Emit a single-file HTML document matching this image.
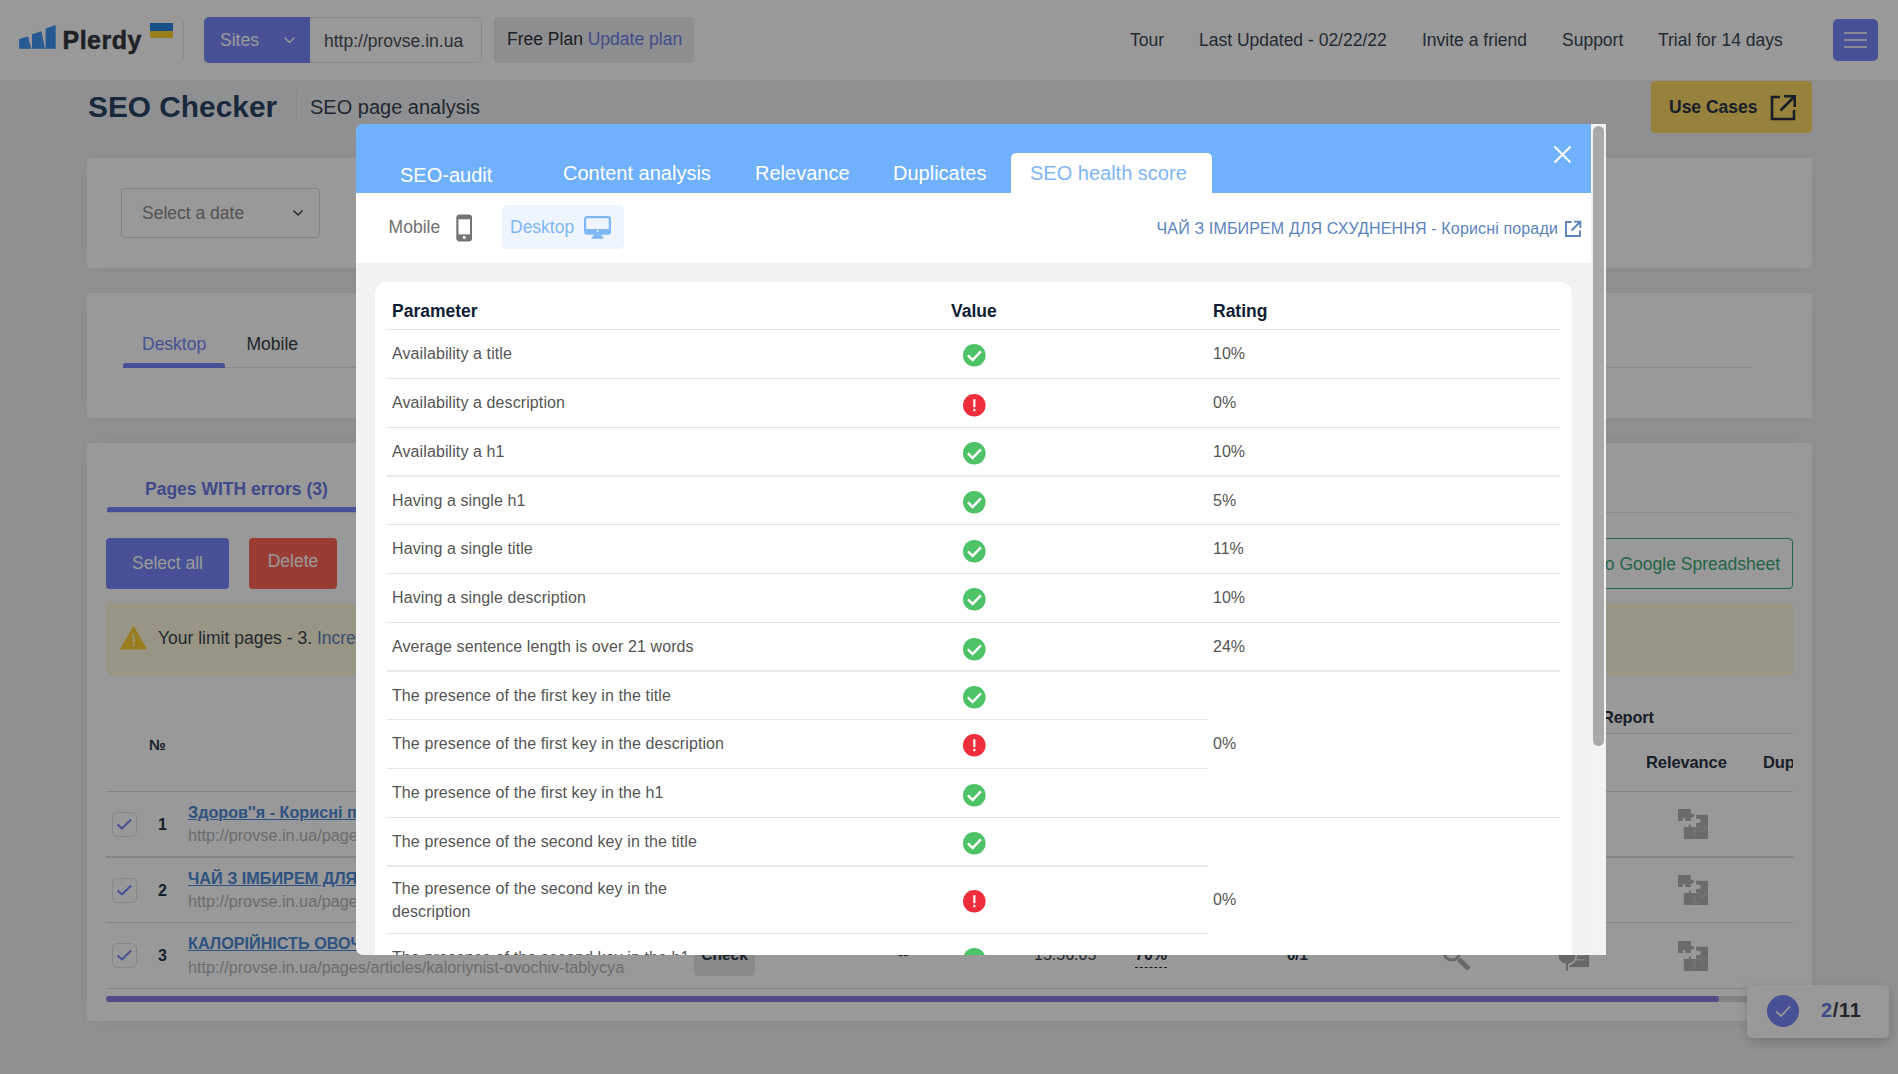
<!DOCTYPE html>
<html lang="en"><head><meta charset="utf-8"><title>SEO Checker</title>
<style>
*{box-sizing:border-box;margin:0;padding:0}
html,body{width:1898px;height:1074px;overflow:hidden}
body{font-family:"Liberation Sans",sans-serif;background:#eff1f4;position:relative;color:#2b2e33}
.abs{position:absolute}
#page{position:absolute;left:0;top:0;width:1898px;height:1074px;overflow:hidden}
#hdr{position:absolute;left:0;top:0;width:1898px;height:80px;background:#fff}
.nav{position:absolute;top:30px;font-size:17.5px;line-height:20px;color:#3a4754;white-space:nowrap}
.card{position:absolute;left:87px;width:1725px;background:#fff;border-radius:4px;box-shadow:0 0 18px rgba(0,0,0,.06)}
#overlay{position:absolute;left:0;top:0;width:1898px;height:1074px;background:rgba(0,0,0,.4)}
#modal{position:absolute;left:356px;top:124px;width:1250px;height:831px;background:#f1f2f4;border-radius:7px 0 0 7px;overflow:hidden}
#mw{position:absolute;left:0;top:1px;width:1250px;height:830px}
#mhead{position:absolute;left:0;top:-1px;width:1235px;height:69px;background:#70b1fd}
.tab{position:absolute;color:#fff;font-size:20px;line-height:24px;white-space:nowrap}
#msub{position:absolute;left:0;top:68px;width:1235px;height:70px;background:#fff}
#mcard{position:absolute;left:19px;top:157px;width:1197px;height:700px;background:#fff;border-radius:12px}
.row{position:absolute;left:12px;height:1px;background:#e3e5e8}
.p{position:absolute;left:17px;font-size:16px;line-height:23px;color:#555;white-space:nowrap;letter-spacing:.1px}
.r{position:absolute;left:838px;font-size:16px;line-height:20px;color:#555;margin-top:1px}
.ic{position:absolute;left:588.1px;width:22.6px;height:22.6px;margin-top:2.2px}
</style></head><body>
<div id="page">
<div id="hdr">
<svg class="abs" style="left:18px;top:22px" width="40" height="30" viewBox="0 0 40 30"><g fill="#4094f2"><path d="M1.1 17 L10 14.5 L13.3 26.8 L1.1 26.8Z"/><path d="M14 12.2 L23.5 9.2 L27 26.8 L14 26.8Z"/><path d="M27.6 6.4 L37.7 3 L37.7 26.8 L27.6 26.8Z"/></g><path d="M10 15 V26.8 M23.5 10 V26.8" stroke="#6aaef8" stroke-width=".7" fill="none"/></svg>
<div class="abs" style="left:62.5px;top:22px;font-size:25px;line-height:36px;font-weight:bold;color:#343840;letter-spacing:.5px;-webkit-text-stroke:.5px #343840">Plerdy</div>
<div class="abs" style="left:150px;top:23px;width:23px;height:8px;background:#2b86e6"></div>
<div class="abs" style="left:150px;top:31px;width:23px;height:7px;background:#ffd42e"></div>
<div class="abs" style="left:183px;top:21px;width:1px;height:38px;background:#e8e8e8"></div>
<div class="abs" style="left:204px;top:17px;width:106px;height:46px;background:#7888f8;border-radius:5px 0 0 5px"></div>
<div class="abs" style="left:220px;top:29px;font-size:17.5px;line-height:22px;color:#fff">Sites</div>
<svg class="abs" style="left:283px;top:36px" width="13" height="9" viewBox="0 0 13 9"><path d="M1.5 1.5 L6.5 6.5 L11.5 1.5" fill="none" stroke="#fff" stroke-width="1.4"/></svg>
<div class="abs" style="left:310px;top:17px;width:172px;height:46px;border:1px solid #e4e4e4;border-left:none;border-radius:0 5px 5px 0"></div>
<div class="abs" style="left:324px;top:30px;font-size:17.5px;line-height:22px;color:#4a4f57">http://provse.in.ua</div>
<div class="abs" style="left:494px;top:17px;width:200px;height:46px;background:#ebedf0;border-radius:4px"></div>
<div class="abs" style="left:507px;top:28px;font-size:17.5px;line-height:22px;color:#2f333a;white-space:nowrap">Free Plan <span style="color:#6f7fe8">Update plan</span></div>
<div class="nav" style="left:1130px">Tour</div>
<div class="nav" style="left:1199px">Last Updated - 02/22/22</div>
<div class="nav" style="left:1422px">Invite a friend</div>
<div class="nav" style="left:1562px">Support</div>
<div class="nav" style="left:1658px">Trial for 14 days</div>
<div class="abs" style="left:1833px;top:19px;width:45px;height:42px;background:#7888f8;border-radius:5px"></div>
<div class="abs" style="left:1844px;top:32px;width:23px;height:2px;background:#dfe3ff;box-shadow:0 7px 0 #dfe3ff,0 14px 0 #dfe3ff"></div>
</div>
<div class="abs" style="left:88px;top:88px;font-size:29.85px;line-height:38px;font-weight:bold;color:#2a4365;white-space:nowrap">SEO Checker</div>
<div class="abs" style="left:296px;top:90px;width:1px;height:34px;background:#e3e5e8"></div>
<div class="abs" style="left:310px;top:95px;font-size:20px;line-height:24px;color:#3a4350;white-space:nowrap">SEO page analysis</div>
<div class="abs" style="left:1651px;top:81px;width:161px;height:52px;background:#fbd966;border-radius:4px"></div>
<div class="abs" style="left:1669px;top:96px;font-size:17.5px;line-height:22px;font-weight:bold;color:#2a3445;white-space:nowrap">Use Cases</div>
<svg class="abs" style="left:1768px;top:93px" width="30" height="30" viewBox="0 0 30 30"><path d="M12 4 H4 V26 H26 V17" fill="none" stroke="#2a3445" stroke-width="2.6"/><path d="M16 3.3 H26.7 V14 M26 4 L12.5 17.5" fill="none" stroke="#2a3445" stroke-width="2.6"/></svg>
<div class="card" style="top:158px;height:110px"></div>
<div class="abs" style="left:121px;top:188px;width:199px;height:50px;border:1px solid #d9d9d9;border-radius:4px"></div>
<div class="abs" style="left:142px;top:202px;font-size:17.5px;line-height:22px;color:#8a8a8a;white-space:nowrap">Select a date</div>
<svg class="abs" style="left:292px;top:208.5px" width="12" height="9" viewBox="0 0 12 9"><path d="M1.5 1.5 L6 6 L10.5 1.5" fill="none" stroke="#444" stroke-width="1.5"/></svg>
<div class="card" style="top:293px;height:125px"></div>
<div class="abs" style="left:142px;top:333px;font-size:17.5px;line-height:22px;color:#7888f8">Desktop</div>
<div class="abs" style="left:246.5px;top:333px;font-size:17.5px;line-height:22px;color:#3a3f47">Mobile</div>
<div class="abs" style="left:123px;top:367px;width:1629px;height:1px;background:#e6e8eb"></div>
<div class="abs" style="left:123px;top:363px;width:102px;height:5px;background:#7888f8;border-radius:3px 3px 0 0"></div>
<div class="card" style="top:443px;height:578px"></div>
<div class="abs" style="left:145px;top:478px;font-size:17.5px;line-height:22px;font-weight:bold;color:#6c7be6;white-space:nowrap">Pages WITH errors (3)</div>
<div class="abs" style="left:107px;top:512px;width:1686px;height:1px;background:#e3e5e8"></div>
<div class="abs" style="left:107px;top:507px;width:400px;height:5px;background:#7888f8;border-radius:3px 3px 0 0"></div>
<div class="abs" style="left:106px;top:538px;width:123px;height:51px;background:#7888f8;border-radius:4px"></div>
<div class="abs" style="left:132px;top:552px;font-size:17.5px;line-height:22px;color:#fff;white-space:nowrap">Select all</div>
<div class="abs" style="left:249px;top:538px;width:88px;height:51px;background:#ff6456;border-radius:4px"></div>
<div class="abs" style="left:267.7px;top:550px;font-size:17.5px;line-height:22px;color:#fff;white-space:nowrap">Delete</div>
<div class="abs" style="left:1500px;top:538px;width:293px;height:51px;border:1px solid #3aa876;border-radius:4px"></div>
<div class="abs" style="right:118px;top:553px;font-size:17.5px;line-height:22px;color:#3aa876;white-space:nowrap">Export data to Google Spreadsheet</div>
<div class="abs" style="left:106px;top:603px;width:1687px;height:71.5px;background:#fff9dc;border-radius:4px"></div>
<svg class="abs" style="left:120px;top:626px" width="27" height="24" viewBox="0 0 27 24"><path d="M13.5 1.5 L25.5 22.5 H1.5Z" fill="#ffd136" stroke="#ffd136" stroke-width="2" stroke-linejoin="round"/><rect x="12.4" y="8" width="2.2" height="8" fill="#fff3c4"/><rect x="12.4" y="17.5" width="2.2" height="2.4" fill="#fff3c4"/></svg>
<div class="abs" style="left:158px;top:627px;font-size:17.5px;line-height:22px;color:#3a4452;white-space:nowrap">Your limit pages - 3. <span style="color:#5b84bd">Increase limits</span></div>
<div class="abs" style="left:149px;top:735px;font-size:15px;line-height:20px;font-weight:bold;color:#2a3445">№</div>
<div class="abs" style="left:1602px;top:707px;font-size:16.3px;line-height:20px;font-weight:bold;color:#2a3445;letter-spacing:-.1px">Report</div>
<div class="abs" style="left:1400px;top:733px;width:393px;height:1px;background:#dcdde0"></div>
<div class="abs" style="left:1646px;top:752px;font-size:16.5px;line-height:20px;font-weight:bold;color:#2a3445;letter-spacing:-.1px">Relevance</div>
<div class="abs" style="left:1763px;top:752px;width:30px;overflow:hidden;font-size:16.5px;line-height:20px;font-weight:bold;color:#2a3445;letter-spacing:-.1px;white-space:nowrap">Duplicates</div>
<div class="abs" style="left:106px;top:791px;width:1687px;height:1px;background:#dcdde0"></div>
<div class="abs" style="left:106px;top:856px;width:1687px;height:2px;background:#dcdde0"></div>
<div class="abs" style="left:106px;top:922px;width:1687px;height:1px;background:#dcdde0"></div>
<div class="abs" style="left:106px;top:988px;width:1687px;height:1px;background:#dcdde0"></div>
<div class="abs" style="left:112px;top:812px;width:25px;height:25px;border:1px solid #e2e3e8;border-radius:5px;background:#fff"></div>
<svg class="abs" style="left:116px;top:818px" width="17" height="13" viewBox="0 0 17 13"><path d="M1.5 6.5 L6 10.5 L15 1.5" fill="none" stroke="#7888f8" stroke-width="2"/></svg>
<div class="abs" style="left:158px;top:815px;font-size:16px;line-height:20px;font-weight:bold;color:#2a3445">1</div>
<div class="abs" style="left:188px;top:801px;font-size:16.2px;line-height:22px;font-weight:bold;color:#4d8bd6;text-decoration:underline;white-space:nowrap">Здоров''я - Корисні поради</div>
<div class="abs" style="left:188px;top:825px;font-size:16.25px;line-height:20px;color:#b4b4b4;white-space:nowrap">http://provse.in.ua/pages/articles/zdorovya</div>
<svg class="abs" style="left:1678px;top:809px" width="30" height="30" viewBox="0 0 30 30"><g fill="#b2b2b2"><path d="M0 0 H12.8 V4.7 H14.3 a1.85 1.85 0 0 1 0 3.7 H12.8 V12.1 H7.4 V9.3 H4.9 V12.1 H0Z"/><path d="M18.1 5.8 H30 V30 H5.8 V18.1 H10.9 V15.4 H13 V18.1 H18.1 V14 H20.6 a2.1 2.1 0 0 0 0 -4.2 H18.1Z"/></g><path d="M17.8 18.1 V22.3 H15.4 V25.6 H17.8 V30 M18.1 17.8 H22 V20.6 a2 2 0 0 0 4 0 V17.8 H30" fill="none" stroke="#cfcfcf" stroke-width=".8"/></svg>
<div class="abs" style="left:112px;top:878px;width:25px;height:25px;border:1px solid #e2e3e8;border-radius:5px;background:#fff"></div>
<svg class="abs" style="left:116px;top:884px" width="17" height="13" viewBox="0 0 17 13"><path d="M1.5 6.5 L6 10.5 L15 1.5" fill="none" stroke="#7888f8" stroke-width="2"/></svg>
<div class="abs" style="left:158px;top:881px;font-size:16px;line-height:20px;font-weight:bold;color:#2a3445">2</div>
<div class="abs" style="left:188px;top:867px;font-size:16.2px;line-height:22px;font-weight:bold;color:#4d8bd6;text-decoration:underline;white-space:nowrap">ЧАЙ З ІМБИРЕМ ДЛЯ СХУДНЕННЯ - Корисні поради</div>
<div class="abs" style="left:188px;top:891px;font-size:16.25px;line-height:20px;color:#b4b4b4;white-space:nowrap">http://provse.in.ua/pages/articles/chay-z-imbyrem</div>
<svg class="abs" style="left:1678px;top:875px" width="30" height="30" viewBox="0 0 30 30"><g fill="#b2b2b2"><path d="M0 0 H12.8 V4.7 H14.3 a1.85 1.85 0 0 1 0 3.7 H12.8 V12.1 H7.4 V9.3 H4.9 V12.1 H0Z"/><path d="M18.1 5.8 H30 V30 H5.8 V18.1 H10.9 V15.4 H13 V18.1 H18.1 V14 H20.6 a2.1 2.1 0 0 0 0 -4.2 H18.1Z"/></g><path d="M17.8 18.1 V22.3 H15.4 V25.6 H17.8 V30 M18.1 17.8 H22 V20.6 a2 2 0 0 0 4 0 V17.8 H30" fill="none" stroke="#cfcfcf" stroke-width=".8"/></svg>
<div class="abs" style="left:112px;top:943px;width:25px;height:25px;border:1px solid #e2e3e8;border-radius:5px;background:#fff"></div>
<svg class="abs" style="left:116px;top:949px" width="17" height="13" viewBox="0 0 17 13"><path d="M1.5 6.5 L6 10.5 L15 1.5" fill="none" stroke="#7888f8" stroke-width="2"/></svg>
<div class="abs" style="left:158px;top:946px;font-size:16px;line-height:20px;font-weight:bold;color:#2a3445">3</div>
<div class="abs" style="left:188px;top:932px;font-size:16.2px;line-height:22px;font-weight:bold;color:#4d8bd6;text-decoration:underline;white-space:nowrap">КАЛОРІЙНІСТЬ ОВОЧІВ - Корисні поради</div>
<div class="abs" style="left:188px;top:957px;font-size:16.25px;line-height:20px;color:#b4b4b4;white-space:nowrap">http://provse.in.ua/pages/articles/kaloriynist-ovochiv-tablycya</div>
<svg class="abs" style="left:1678px;top:940.7px" width="30" height="30" viewBox="0 0 30 30"><g fill="#b2b2b2"><path d="M0 0 H12.8 V4.7 H14.3 a1.85 1.85 0 0 1 0 3.7 H12.8 V12.1 H7.4 V9.3 H4.9 V12.1 H0Z"/><path d="M18.1 5.8 H30 V30 H5.8 V18.1 H10.9 V15.4 H13 V18.1 H18.1 V14 H20.6 a2.1 2.1 0 0 0 0 -4.2 H18.1Z"/></g><path d="M17.8 18.1 V22.3 H15.4 V25.6 H17.8 V30 M18.1 17.8 H22 V20.6 a2 2 0 0 0 4 0 V17.8 H30" fill="none" stroke="#cfcfcf" stroke-width=".8"/></svg>
<div class="abs" style="left:694px;top:936px;width:61px;height:40px;background:#e6e6e6;border-radius:4px"></div>
<div class="abs" style="left:694px;top:945px;width:61px;text-align:center;font-size:15.5px;line-height:20px;font-weight:bold;color:#2a3445">Check</div>
<div class="abs" style="left:898px;top:945px;font-size:15.5px;line-height:20px;color:#3a3f47">--</div>
<div class="abs" style="left:1034px;top:945px;font-size:16px;line-height:20px;color:#3a3f47;white-space:nowrap">15:56:05</div>
<div class="abs" style="left:1135px;top:945px;font-size:16px;line-height:20px;font-weight:bold;color:#2a3445;border-bottom:1px dashed #2a3445;height:23px">70%</div>
<div class="abs" style="left:1287px;top:945px;font-size:15px;line-height:20px;font-weight:bold;color:#2a3445">0/1</div>
<svg class="abs" style="left:1441px;top:940px" width="31" height="32" viewBox="0 0 31 32"><circle cx="10.8" cy="12.1" r="7.9" fill="none" stroke="#adadad" stroke-width="2.8"/><path d="M17.6 19.2 L28 29" stroke="#adadad" stroke-width="5"/></svg>
<svg class="abs" style="left:1558px;top:940px" width="33" height="32" viewBox="0 0 33 32"><path d="M11.6 6 H31.1 V27.1 H11.6Z" fill="#adadad"/><path d="M18 15 H26.4 M18 19.8 H26.4" stroke="#e0e0e0" stroke-width="1.4"/><circle cx="9" cy="15.6" r="9.2" fill="#adadad" stroke="#fff" stroke-width="1.6"/><path d="M9 20 V30.8" stroke="#adadad" stroke-width="2"/></svg>
<div class="abs" style="left:106px;top:996px;width:1687px;height:5.5px;background:#dadada;border-radius:3px"></div>
<div class="abs" style="left:106px;top:996px;width:1613px;height:5.5px;background:#8e7ce0;border-radius:3px"></div>
<div class="abs" style="left:1747px;top:985px;width:142px;height:53px;background:#fff;border-radius:5px;box-shadow:0 4px 12px rgba(0,0,0,.18)"></div>
<div class="abs" style="left:1767px;top:995px;width:32px;height:32px;border-radius:16px;background:#7888f8"></div>
<svg class="abs" style="left:1774px;top:1004px" width="18" height="15" viewBox="0 0 18 15"><path d="M2 7.5 L7 12 L16 2.5" fill="none" stroke="#fff" stroke-width="1.8"/></svg>
<div class="abs" style="left:1821px;top:998px;font-size:20px;line-height:24px;font-weight:bold;color:#3a3f47;white-space:nowrap;letter-spacing:.7px"><span style="color:#6c7be6">2</span>/11</div>
</div>
<div id="overlay"></div>
<div id="modal"><div id="mw">
<div id="mhead"></div>
<div class="tab" style="left:44px;top:38px">SEO-audit</div>
<div class="tab" style="left:207px;top:36px">Content analysis</div>
<div class="tab" style="left:399px;top:36px">Relevance</div>
<div class="tab" style="left:537px;top:36px">Duplicates</div>
<div class="abs" style="left:655px;top:28px;width:201px;height:42px;background:#fff;border-radius:5px 5px 0 0"></div>
<div class="tab" style="left:674px;top:36px;color:#7fb6f6">SEO health score</div>
<svg class="abs" style="left:1197px;top:20px" width="19" height="19" viewBox="0 0 19 19"><path d="M1.5 1.5 L17.5 17.5 M17.5 1.5 L1.5 17.5" fill="none" stroke="#fff" stroke-width="2"/></svg>
<div id="msub"></div>
<div class="abs" style="left:32.6px;top:91px;font-size:17.5px;line-height:22px;color:#707070">Mobile</div>
<svg class="abs" style="left:99.5px;top:88.5px" width="16.5" height="28" viewBox="0 0 18 30"><rect x="1.5" y="1.5" width="15" height="27" rx="2.5" fill="#fff" stroke="#747474" stroke-width="2.4"/><rect x="1.5" y="1.5" width="15" height="4" fill="#747474"/><rect x="1.5" y="22" width="15" height="6" fill="#747474"/><circle cx="9" cy="25.3" r="1.6" fill="#fff"/></svg>
<div class="abs" style="left:146px;top:80px;width:122px;height:44px;background:#eff5fe;border-radius:5px"></div>
<div class="abs" style="left:154px;top:91px;font-size:17.5px;line-height:22px;color:#7fb6f6">Desktop</div>
<svg class="abs" style="left:227.8px;top:91px" width="27" height="23.3" viewBox="0 0 29 25"><rect x="1.2" y="1.2" width="26.6" height="17.6" rx="2" fill="#eff5fe" stroke="#7fb6f6" stroke-width="2.4"/><rect x="1.2" y="14" width="26.6" height="4.8" fill="#7fb6f6"/><path d="M11 19 H18 L19 22.5 H10Z" fill="#7fb6f6"/><rect x="8" y="22" width="13" height="2.4" rx="1" fill="#7fb6f6"/><circle cx="14.5" cy="16.3" r="1" fill="#fff"/></svg>
<div class="abs" style="right:48px;top:94px;font-size:16px;line-height:20px;color:#5b84bd;white-space:nowrap;letter-spacing:.15px">ЧАЙ З ІМБИРЕМ ДЛЯ СХУДНЕННЯ - Корисні поради</div>
<svg class="abs" style="left:1208px;top:94.5px" width="18" height="18" viewBox="0 0 18 18"><path d="M7.5 2 H2 V16 H16 V10.5" fill="none" stroke="#5b84bd" stroke-width="1.9"/><path d="M10 1.6 H16.4 V8 M16 2 L7.5 10.5" fill="none" stroke="#5b84bd" stroke-width="1.9"/></svg>
<div id="mcard">
<div class="abs" style="left:17px;top:18px;font-size:17.5px;line-height:22px;font-weight:bold;color:#0f1c36">Parameter</div>
<div class="abs" style="left:576px;top:18px;font-size:17.5px;line-height:22px;font-weight:bold;color:#0f1c36">Value</div>
<div class="abs" style="left:838px;top:18px;font-size:17.5px;line-height:22px;font-weight:bold;color:#0f1c36">Rating</div>
<div class="row" style="top:47px;width:1173px;height:1px"></div>
<div class="p" style="top:60.0px">Availability a title</div>
<svg class="ic" style="top:60px" viewBox="0 0 24 24"><circle cx="12" cy="12" r="12" fill="#4ec266"/><path d="M5.2 12.2 L10.2 17 L19 7.8" fill="none" stroke="#fff" stroke-width="2.6"/></svg>
<div class="r" style="top:61.0px">10%</div>
<div class="row" style="top:96px;width:1173px;height:1px"></div>
<div class="p" style="top:109.0px">Availability a description</div>
<svg class="ic" style="top:110px" viewBox="0 0 24 24"><circle cx="12" cy="12" r="12" fill="#ee2f3b"/><rect x="10.9" y="5.5" width="2.3" height="8.5" fill="#fff"/><rect x="10.9" y="15.8" width="2.3" height="2.5" fill="#fff"/></svg>
<div class="r" style="top:110.0px">0%</div>
<div class="row" style="top:145px;width:1173px;height:1px"></div>
<div class="p" style="top:158.0px">Availability a h1</div>
<svg class="ic" style="top:158px" viewBox="0 0 24 24"><circle cx="12" cy="12" r="12" fill="#4ec266"/><path d="M5.2 12.2 L10.2 17 L19 7.8" fill="none" stroke="#fff" stroke-width="2.6"/></svg>
<div class="r" style="top:159.0px">10%</div>
<div class="row" style="top:193px;width:1173px;height:2px;background:#e7e9ec"></div>
<div class="p" style="top:206.5px">Having a single h1</div>
<svg class="ic" style="top:207px" viewBox="0 0 24 24"><circle cx="12" cy="12" r="12" fill="#4ec266"/><path d="M5.2 12.2 L10.2 17 L19 7.8" fill="none" stroke="#fff" stroke-width="2.6"/></svg>
<div class="r" style="top:207.5px">5%</div>
<div class="row" style="top:242px;width:1173px;height:1px"></div>
<div class="p" style="top:255.0px">Having a single title</div>
<svg class="ic" style="top:256px" viewBox="0 0 24 24"><circle cx="12" cy="12" r="12" fill="#4ec266"/><path d="M5.2 12.2 L10.2 17 L19 7.8" fill="none" stroke="#fff" stroke-width="2.6"/></svg>
<div class="r" style="top:256.0px">11%</div>
<div class="row" style="top:291px;width:1173px;height:1px"></div>
<div class="p" style="top:304.0px">Having a single description</div>
<svg class="ic" style="top:304px" viewBox="0 0 24 24"><circle cx="12" cy="12" r="12" fill="#4ec266"/><path d="M5.2 12.2 L10.2 17 L19 7.8" fill="none" stroke="#fff" stroke-width="2.6"/></svg>
<div class="r" style="top:305.0px">10%</div>
<div class="row" style="top:340px;width:1173px;height:1px"></div>
<div class="p" style="top:353.0px">Average sentence length is over 21 words</div>
<svg class="ic" style="top:354px" viewBox="0 0 24 24"><circle cx="12" cy="12" r="12" fill="#4ec266"/><path d="M5.2 12.2 L10.2 17 L19 7.8" fill="none" stroke="#fff" stroke-width="2.6"/></svg>
<div class="r" style="top:354.0px">24%</div>
<div class="row" style="top:388px;width:1173px;height:2px;background:#e7e9ec"></div>
<div class="p" style="top:401.5px">The presence of the first key in the title</div>
<svg class="ic" style="top:402px" viewBox="0 0 24 24"><circle cx="12" cy="12" r="12" fill="#4ec266"/><path d="M5.2 12.2 L10.2 17 L19 7.8" fill="none" stroke="#fff" stroke-width="2.6"/></svg>
<div class="row" style="top:437px;width:821px;height:1px"></div>
<div class="p" style="top:450.0px">The presence of the first key in the description</div>
<svg class="ic" style="top:450px" viewBox="0 0 24 24"><circle cx="12" cy="12" r="12" fill="#ee2f3b"/><rect x="10.9" y="5.5" width="2.3" height="8.5" fill="#fff"/><rect x="10.9" y="15.8" width="2.3" height="2.5" fill="#fff"/></svg>
<div class="row" style="top:486px;width:821px;height:1px"></div>
<div class="p" style="top:499.0px">The presence of the first key in the h1</div>
<svg class="ic" style="top:500px" viewBox="0 0 24 24"><circle cx="12" cy="12" r="12" fill="#4ec266"/><path d="M5.2 12.2 L10.2 17 L19 7.8" fill="none" stroke="#fff" stroke-width="2.6"/></svg>
<div class="row" style="top:535px;width:1173px;height:1px"></div>
<div class="p" style="top:548.0px">The presence of the second key in the title</div>
<svg class="ic" style="top:548px" viewBox="0 0 24 24"><circle cx="12" cy="12" r="12" fill="#4ec266"/><path d="M5.2 12.2 L10.2 17 L19 7.8" fill="none" stroke="#fff" stroke-width="2.6"/></svg>
<div class="row" style="top:583px;width:821px;height:2px;background:#e7e9ec"></div>
<div class="p" style="top:595px">The presence of the second key in the<br>description</div>
<svg class="ic" style="top:606px" viewBox="0 0 24 24"><circle cx="12" cy="12" r="12" fill="#ee2f3b"/><rect x="10.9" y="5.5" width="2.3" height="8.5" fill="#fff"/><rect x="10.9" y="15.8" width="2.3" height="2.5" fill="#fff"/></svg>
<div class="row" style="top:651px;width:821px;height:1px"></div>
<div class="p" style="top:664.0px">The presence of the second key in the h1</div>
<svg class="ic" style="top:664px" viewBox="0 0 24 24"><circle cx="12" cy="12" r="12" fill="#4ec266"/><path d="M5.2 12.2 L10.2 17 L19 7.8" fill="none" stroke="#fff" stroke-width="2.6"/></svg>
<div class="r" style="top:451px">0%</div>
<div class="r" style="top:607px">0%</div>
</div>
<div class="abs" style="left:1235px;top:-1px;width:15px;height:831px;background:#f3f3f3"></div>
<div class="abs" style="left:1237px;top:1px;width:11px;height:620px;background:#a9a9a9;border-radius:6px"></div>
</div></div>
</body></html>
